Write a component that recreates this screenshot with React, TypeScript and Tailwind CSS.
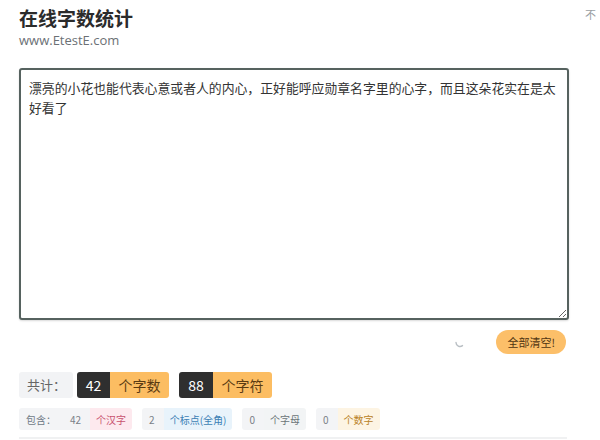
const text =
  "漂亮的小花也能代表心意或者人的内心，正好能呼应勋章名字里的心字，而且这朵花实在是太好看了";

const cjk = { fontFamily: '"Microsoft YaHei", "Noto Sans CJK SC", sans-serif' };

type Detail = { num: string; label: string; tone: string };

const details: Detail[] = [
  { num: "42", label: "个汉字", tone: "bg-[#fde9ee] text-[#c8516f]" },
  { num: "2", label: "个标点(全角)", tone: "bg-[#e8f3fb] text-[#3b7fb5]" },
  { num: "0", label: "个字母", tone: "bg-[#f2f4f5] text-[#6b7478]" },
  { num: "0", label: "个数字", tone: "bg-[#fdf4e3] text-[#b98226]" },
];

function Spinner() {
  return (
    <svg width="12" height="12" viewBox="0 0 12 12" className="text-[#b9bfc4]">
      <path
        d="M2 6.5 A4 4 0 0 0 8.5 9.6"
        fill="none"
        stroke="currentColor"
        strokeWidth="1.4"
        strokeLinecap="round"
      />
    </svg>
  );
}

export default function App() {
  return (
    <div className="relative h-[440px] w-[600px] overflow-hidden bg-white text-[#333]" style={cjk}>
      <span className="absolute right-[4px] top-[6px] text-[11px] text-[#9aa0a4]">不</span>

      <div className="ml-[19px] w-[550px] pt-[6px]">
        <h1 className="text-[19px] font-bold leading-[24px] text-[#2b2b2b]">在线字数统计</h1>
        <p
          className="mt-[2px] text-[13px] leading-[16px] text-[#6b7075]"
          style={{ fontFamily: '"Open Sans", "Noto Sans", sans-serif' }}
        >
          www.EtestE.com
        </p>

        <textarea
          className="mt-[20px] block h-[252px] w-full rounded-[3px] border-2 border-[#56625f] bg-white px-[8px] pt-[8px] text-[12.85px] leading-[20px] text-[#333] shadow-[0_1px_2px_rgba(0,0,0,0.15)] outline-none"
          style={cjk}
          defaultValue={text}
        />

        <div className="mt-[10px] flex h-[24px] items-center justify-end gap-[30px] pr-[3px]">
          <Spinner />
          <button
            type="button"
            className="h-[24px] rounded-full bg-[#fcbf69] px-[11px] text-[11px] text-[#4f3412]"
          >
            全部清空!
          </button>
        </div>

        <div className="mt-[18px] flex h-[26px] items-stretch">
          <div className="flex items-center rounded-[3px] bg-[#f2f3f5] pl-[8px] pr-[7px] text-[13px] text-[#666]">
            共计：
          </div>
          <div className="ml-[4px] flex overflow-hidden rounded-[3px]">
            <span className="flex w-[33px] items-center justify-center bg-[#2f2f2f] text-[14px] text-white">42</span>
            <span className="flex w-[59px] items-center justify-center bg-[#fcbd62] text-[14px] text-[#5b3b12]">个字数</span>
          </div>
          <div className="ml-[10px] flex overflow-hidden rounded-[3px]">
            <span className="flex w-[34px] items-center justify-center bg-[#2f2f2f] text-[14px] text-white">88</span>
            <span className="flex w-[59px] items-center justify-center bg-[#fcbd62] text-[14px] text-[#5b3b12]">个字符</span>
          </div>
        </div>

        <div className="mt-[10px] flex h-[22px] items-stretch text-[10px]">
          <div className="flex items-center rounded-l-[3px] bg-[#f3f4f6] pl-[7px] pr-[12px] text-[#6f7a86]">包含：</div>
          {details.map((d, i) => (
            <div key={d.label} className={`flex ${i === 0 ? "" : "ml-[10px]"}`}>
              <span
                className={`flex items-center bg-[#f3f4f6] pr-[9px] text-[#7a8088] ${i === 0 ? "pl-[2px]" : "rounded-l-[3px] pl-[7px]"}`}
              >
                {d.num}
              </span>
              <span className={`flex items-center rounded-r-[3px] px-[6px] ${d.tone}`}>{d.label}</span>
            </div>
          ))}
        </div>

        <div className="mt-[7px] h-[2px] w-[548px] bg-[#f0f1f2]" />
      </div>
    </div>
  );
}
